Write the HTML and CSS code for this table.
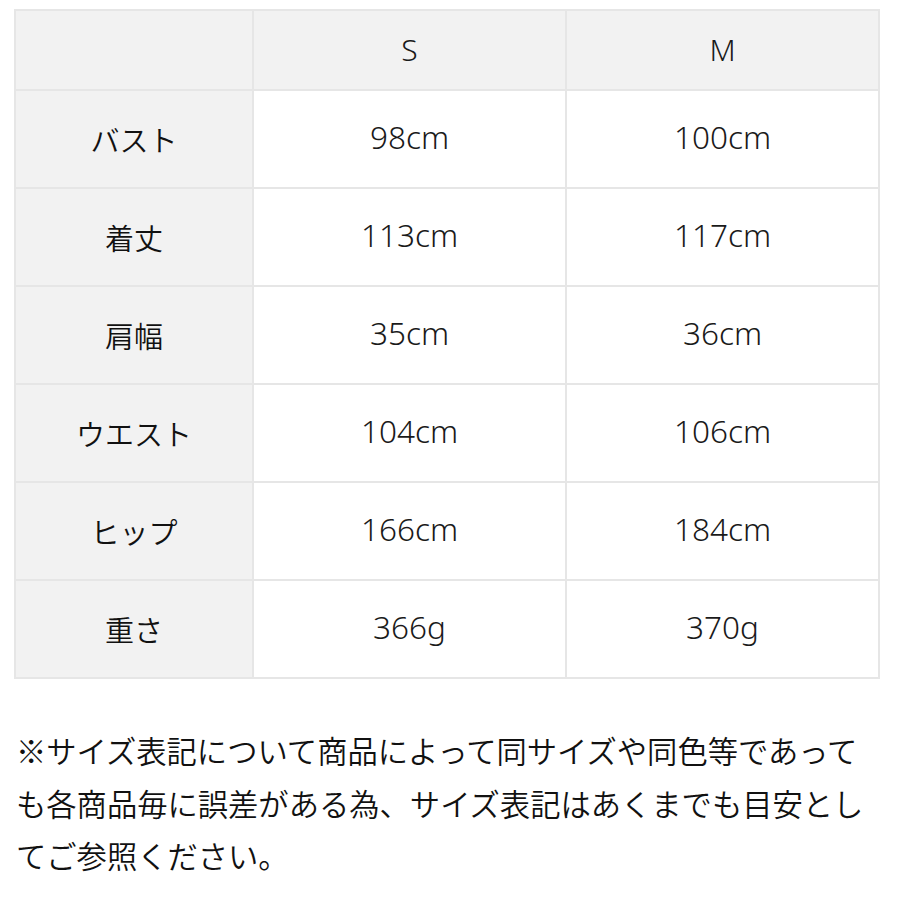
FILE: index.html
```html
<!DOCTYPE html>
<html lang="ja">
<head>
<meta charset="utf-8">
<link rel="stylesheet" href="styles.css">
</head>
<body>
<div class="page">
  <table class="size-table">
    <colgroup>
      <col class="c-label">
      <col class="c-size">
      <col class="c-size2">
    </colgroup>
    <thead>
      <tr class="head-row">
        <th class="label"></th>
        <th>S</th>
        <th>M</th>
      </tr>
    </thead>
    <tbody>
      <tr><th class="label">バスト</th><td>98cm</td><td>100cm</td></tr>
      <tr><th class="label">着丈</th><td>113cm</td><td>117cm</td></tr>
      <tr><th class="label">肩幅</th><td>35cm</td><td>36cm</td></tr>
      <tr><th class="label">ウエスト</th><td>104cm</td><td>106cm</td></tr>
      <tr><th class="label">ヒップ</th><td>166cm</td><td>184cm</td></tr>
      <tr class="last"><th class="label">重さ</th><td>366g</td><td>370g</td></tr>
    </tbody>
  </table>
  <p class="note">※サイズ表記について商品によって同サイズや同色等であっても各商品毎に誤差がある為、サイズ表記はあくまでも目安としてご参照ください。</p>
</div>
</body>
</html>
```

FILE: styles.css
```css
html, body {
  margin: 0;
  padding: 0;
  background: #ffffff;
}

.page {
  padding: 9px 0 0 14px;
  width: 866px;
  font-family: "Noto Sans", "Noto Sans CJK JP", sans-serif;
  color: #1a1a1a;
}

.size-table {
  border-collapse: collapse;
  width: 866px;
  table-layout: fixed;
  border: 2px solid #e6e6e6;
}

.c-label { width: 238px; }
.c-size { width: 313px; }
.c-size2 { width: 313px; }

.size-table th,
.size-table td {
  border: 2px solid #e6e6e6;
  text-align: center;
  vertical-align: middle;
  padding: 0;
  font-weight: 300;
  font-size: 31px;
  height: 96px;
}

.size-table td {
  font-size: 31.5px;
  background: #ffffff;
  padding-bottom: 6px;
  height: 90px;
}

.size-table .head-row th {
  height: 76px;
  background: #f2f2f2;
  font-size: 30px;
  padding-bottom: 2px;
}

.size-table th.label {
  background: #f2f2f2;
  font-family: "Noto Sans CJK JP", sans-serif;
  font-weight: 350;
  font-size: 29px;
  color: #111111;
}

.note {
  margin: 45px 0 0 2px;
  width: 860px;
  font-family: "Noto Sans CJK JP", sans-serif;
  font-weight: 350;
  font-size: 30.3px;
  line-height: 52.5px;
  color: #111111;
}
```
